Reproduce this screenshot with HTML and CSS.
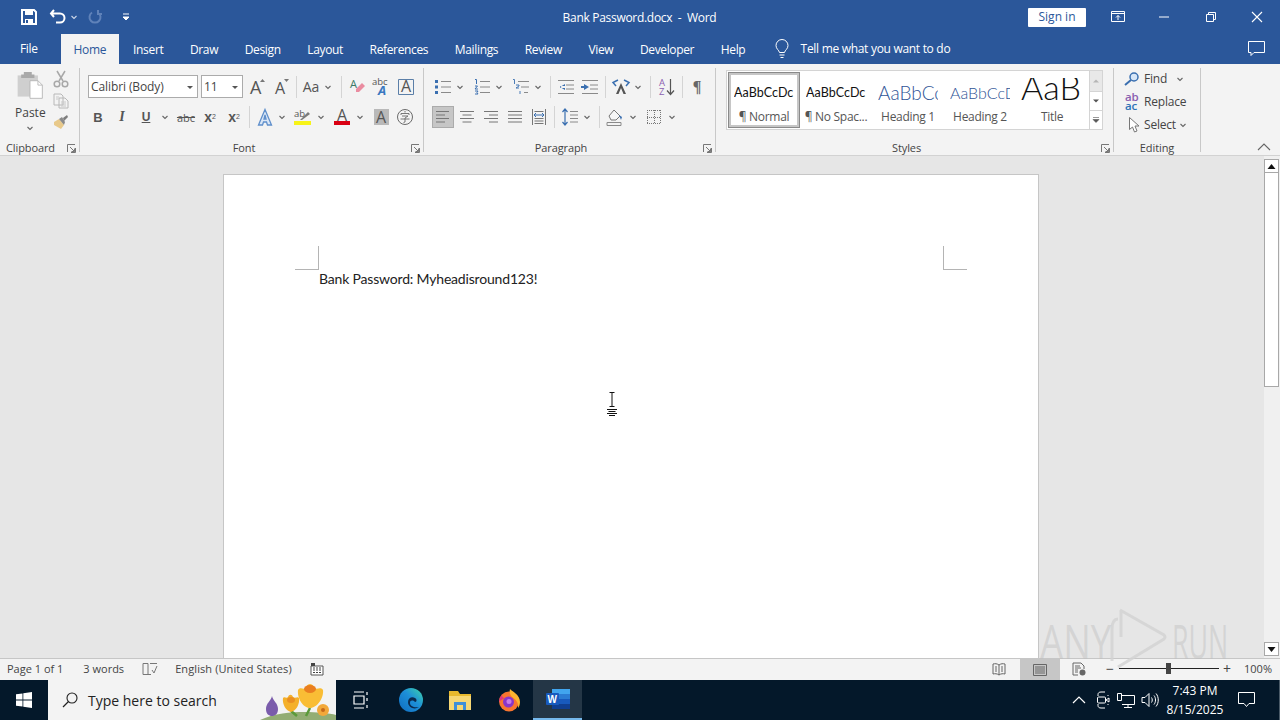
FILE: index.html
```html
<!DOCTYPE html>
<html lang="en">
<head>
<meta charset="utf-8">
<title>Bank Password.docx - Word</title>
<link rel="stylesheet" href="styles.css">
</head>
<body>
<svg class="defs" width="0" height="0" aria-hidden="true">
<symbol id="chev" viewBox="0 0 10 10"><path d="M2.5 4 5 6.5 7.5 4" fill="none" stroke="#666" stroke-width="1.1"/></symbol>
</svg>
<div class="app">
  <header class="titlebar">
    <div class="qat">
      <svg class="q1" width="18" height="18" viewBox="0 0 18 18"><path d="M2 2h12l2 2v12H2z" fill="none" stroke="#fff" stroke-width="2"/><path d="M5 2h8v5H5zM5 11h8v5H5z" fill="#fff"/><path d="M6 12h2v3H6z" fill="#2b579a"/></svg>
      <svg class="q2" width="18" height="18" viewBox="0 0 18 18"><path d="M5 2 2 5.500 5 9M3 5.500h8a4 4 0 0 1 0 9H7" fill="none" stroke="#fff" stroke-width="2"/></svg>
      <svg class="q3" width="10" height="10" viewBox="0 0 10 10"><path d="M2.500 4 5 6.500 7.500 4" fill="none" stroke="#cdd7e8" stroke-width="1.100"/></svg>
      <svg class="q4" width="16" height="16" viewBox="0 0 16 16"><path d="M5 3.500a5.500 5.500 0 1 0 6 0M11 1v4h4" fill="none" stroke="#5f82b9" stroke-width="2"/></svg>
      <svg class="q5" width="10" height="10" viewBox="0 0 10 10"><path d="M2 2h6M2 5h6L5 8z" fill="#fff" stroke="#fff"/></svg>
    </div>
    <div class="doc-title">Bank Password.docx&nbsp; -&nbsp; Word</div>
    <div class="win">
      <button class="signin">Sign in</button>
      <svg class="w1" width="16" height="14" viewBox="0 0 16 14"><path d="M.5 1.500h13v10H.5zM.5 3.500h13M7 10V5.500M5 7.500 7 5.500l2 2" fill="none" stroke="#fff"/></svg>
      <svg class="w2" width="12" height="12" viewBox="0 0 12 12"><path d="M1 6h10" stroke="#fff"/></svg>
      <svg class="w3" width="12" height="12" viewBox="0 0 12 12"><path d="M1.500 3.500h7v7h-7zM3.500 3.500v-2h7v7h-2" fill="none" stroke="#fff"/></svg>
      <svg class="w4" width="12" height="12" viewBox="0 0 12 12"><path d="M1 1l10 10M11 1 1 11" stroke="#fff" stroke-width="1.100"/></svg>
    </div>
  </header>
  <nav class="tabs">
    <span class="tab file">File</span>
    <span class="tab active">Home</span>
    <span class="tab">Insert</span>
    <span class="tab">Draw</span>
    <span class="tab">Design</span>
    <span class="tab">Layout</span>
    <span class="tab">References</span>
    <span class="tab">Mailings</span>
    <span class="tab">Review</span>
    <span class="tab">View</span>
    <span class="tab">Developer</span>
    <span class="tab">Help</span>
    <svg class="bulb" width="16" height="20" viewBox="0 0 16 20"><path d="M5.500 13.500C5 11 2 10 2 6.500a6 6 0 0 1 12 0c0 3.500-3 4.500-3.500 7zM5.500 16h5M6.500 18.500h3" fill="none" stroke="#fff"/></svg>
    <span class="tellme">Tell me what you want to do</span>
    <svg class="comment" width="18" height="16" viewBox="0 0 18 16"><path d="M.5.500h16v11H6l-3 3v-3H.5z" fill="none" stroke="#fff"/></svg>
  </nav>
  <section class="ribbon">
    <div class="group g-clip">
      <div class="clip-body">
        <div class="paste">
          <svg width="30" height="30" viewBox="0 0 30 34"><path d="M1 5h23v24H1z" fill="#cfcfcf"/><path d="M8 4h9V1H8zM5 4h15v4H5z" fill="#a9a9a9"/><path d="M15 11h9l5 5v15H15z" fill="#fff" stroke="#b5b5b5"/><path d="M24 11v5h5" fill="none" stroke="#b5b5b5"/></svg>
          <span class="paste-l">Paste</span>
          <svg class="ch" width="10" height="10"><use href="#chev"/></svg>
        </div>
        <div class="clip-tools">
          <svg width="16" height="18" viewBox="0 0 16 18"><path d="M4 1l6 10M12 1 6 11" stroke="#a8a8a8" stroke-width="1.500"/><circle cx="4" cy="14" r="2.800" fill="none" stroke="#a8a8a8" stroke-width="1.500"/><circle cx="12" cy="14" r="2.800" fill="none" stroke="#a8a8a8" stroke-width="1.500"/></svg>
          <svg width="16" height="16" viewBox="0 0 16 16"><path d="M1 1h7l2 2v9H1zM6 5h6l3 3v7H6z" fill="#f3f3f3" stroke="#b8b8b8"/><path d="M8 9h5M8 11h5M8 13h5M3 4h3M3 6h2" stroke="#c8c8c8"/></svg>
          <svg width="16" height="16" viewBox="0 0 16 16"><path d="M1 8l5-3 5 6-3 4-7-4z" fill="#e8c98a"/><path d="M6 5l3-2 3 5-1 3z" fill="#8a8a8a"/><path d="M10 4l4-3 1 2-4 4z" fill="#7d7d7d"/></svg>
        </div>
      </div>
      <div class="g-label clip-label"><span>Clipboard</span><svg class="launch" width="9" height="9" viewBox="0 0 9 9"><path d="M.500 8V.500H8M3 3l4.500 4.500M7.500 4.500v3h-3M8.500 4v4.500H4" fill="none" stroke="#777"/></svg></div>
    </div>
    <div class="group g-font">
      <div class="rows">
        <div class="row r1">
          <div class="combo c-font ml2"><span>Calibri (Body)</span><svg width="10" height="10" viewBox="0 0 10 10"><path d="M2 4h6L5 7z" fill="#555"/></svg></div>
          <div class="combo c-size ml3"><span>11</span><svg width="10" height="10" viewBox="0 0 10 10"><path d="M2 4h6L5 7z" fill="#555"/></svg></div>
          <span class="tool ml3"><svg width="20" height="20" viewBox="0 0 20 20"><text x="2" y="17" class="ic-a big">A</text><path d="M12 5l2.500-3L17 5z" fill="#777"/></svg></span>
          <span class="tool"><svg width="20" height="20" viewBox="0 0 20 20"><text x="3" y="17" class="ic-a">A</text><path d="M12 2l2.500 3L17 2z" fill="#777"/></svg></span>
          <i class="sep ml2"></i>
          <span class="tool ml2 txt aa">Aa</span>
          <span class="chev"><svg width="10" height="10"><use href="#chev"/></svg></span>
          <i class="sep ml8"></i>
          <span class="tool ml3"><svg width="20" height="20" viewBox="0 0 20 20"><path d="M9 12l6-6 3 3-6 6h-3z" fill="#ea8ca0"/><text x="3" y="11" class="ic-s grn">A</text></svg></span>
          <span class="tool"><svg width="20" height="20" viewBox="0 0 20 20"><text x="1" y="8" class="ic-xs">abc</text><text x="7" y="18" class="ic-i">A</text></svg></span>
          <span class="tool"><svg width="20" height="20" viewBox="0 0 20 20"><path d="M3.500 2.500h15v15h-15z" fill="none" stroke="#5b7fa8"/><text x="6" y="15" class="ic-a">A</text></svg></span>
        </div>
        <div class="row r2">
          <span class="tool txt b">B</span>
          <span class="tool txt i">I</span>
          <span class="tool txt u">U</span>
          <span class="chev ml2"><svg width="10" height="10"><use href="#chev"/></svg></span>
          <span class="tool ml4 txt abc">abc</span>
          <span class="tool txt sx">x<sub>2</sub></span>
          <span class="tool txt sx">x<sup>2</sup></span>
          <i class="sep ml3"></i>
          <span class="tool ml3"><svg width="20" height="20" viewBox="0 0 20 20"><path d="M10 2.500 16.500 18h-4l-1-3h-3l-1 3h-4zM10 8l-1 4h2z" fill="#dbe7f6" stroke="#5f8fcb" stroke-width="1.300"/></svg></span>
          <span class="chev"><svg width="10" height="10"><use href="#chev"/></svg></span>
          <span class="tool ml4"><svg width="20" height="20" viewBox="0 0 20 20"><rect x="1" y="14" width="17" height="4" fill="#f7f318"/><text x="1" y="10" class="ic-xs">ab</text><path d="M7 13l8-8 2 2-8 6z" fill="#7b7b7b"/></svg></span>
          <span class="chev ml1"><svg width="10" height="10"><use href="#chev"/></svg></span>
          <span class="tool ml4"><svg width="20" height="20" viewBox="0 0 20 20"><rect x="2" y="14" width="16" height="4" fill="#d90012"/><text x="5" y="14" class="ic-a">A</text></svg></span>
          <span class="chev ml1"><svg width="10" height="10"><use href="#chev"/></svg></span>
          <span class="tool ml4"><svg width="20" height="20" viewBox="0 0 20 20"><rect x="3" y="2" width="15" height="16" fill="#b9b9b9"/><text x="5" y="16" class="ic-a">A</text></svg></span>
          <span class="tool"><svg width="20" height="20" viewBox="0 0 20 20"><circle cx="10" cy="10" r="7.500" fill="none" stroke="#6a6a6a"/><path d="M10 4v1.500M6 8V6.500h8V8M7 9h6l-3 2M5.500 12h9M10 11v4l-1.500.5" fill="none" stroke="#6a6a6a" stroke-width=".9"/></svg></span>
        </div>
      </div>
      <div class="g-label lb-font"><span>Font</span><svg class="launch" width="9" height="9" viewBox="0 0 9 9"><path d="M.500 8V.500H8M3 3l4.500 4.500M7.500 4.500v3h-3M8.500 4v4.500H4" fill="none" stroke="#777"/></svg></div>
    </div>
    <div class="group g-para">
      <div class="rows">
        <div class="row r1">
          <span class="tool"><svg width="20" height="20" viewBox="0 0 20 20"><path d="M8 4.500h10M8 10h10M8 15.500h10" stroke="#8a8a8a"/><path d="M2 3h3v3H2zM2 8.500h3v3H2zM2 14h3v3H2z" fill="#3a6fb0"/></svg></span>
          <span class="chev"><svg width="10" height="10"><use href="#chev"/></svg></span>
          <span class="tool ml5"><svg width="20" height="20" viewBox="0 0 20 20"><path d="M8 4.500h10M8 10h10M8 15.500h10" stroke="#8a8a8a"/><path d="M3 2.500h1.500V7M3 9h2.500L3 12h3M3 14h3l-1 1.500 1 1.500H3" fill="none" stroke="#3a6fb0"/></svg></span>
          <span class="chev"><svg width="10" height="10"><use href="#chev"/></svg></span>
          <span class="tool ml5"><svg width="20" height="20" viewBox="0 0 20 20"><path d="M7 4.500h11M10 10h8M13 15.500h4" stroke="#8a8a8a"/><path d="M2 2.500h1.500V7M5 8h3v1l-3 2h3M9 14v3" fill="none" stroke="#3a6fb0" stroke-width=".9"/></svg></span>
          <span class="chev"><svg width="10" height="10"><use href="#chev"/></svg></span>
          <i class="sep ml7"></i>
          <span class="tool ml3"><svg width="20" height="20" viewBox="0 0 20 20"><path d="M2 3.500h16M10 8h8M10 12h8M2 16.500h16" stroke="#8a8a8a"/><path d="M9 7 4 10l5 3zM4 9h5v2H4z" fill="#3a6fb0"/></svg></span>
          <span class="tool"><svg width="20" height="20" viewBox="0 0 20 20"><path d="M2 3.500h16M10 8h8M10 12h8M2 16.500h16" stroke="#8a8a8a"/><path d="M4 7l5 3-5 3zM1 9h5v2H1z" fill="#3a6fb0"/></svg></span>
          <i class="sep ml3"></i>
          <span class="tool ml3"><svg width="20" height="20" viewBox="0 0 20 20"><path d="M10 6 5 17h2.500l2.500-6 2.500 6H15z" fill="#555"/><path d="M7 3 2 5.500 5 9M13 3l5 2.500L15 9" fill="none" stroke="#3a6fb0" stroke-width="1.500"/></svg></span>
          <span class="chev"><svg width="10" height="10"><use href="#chev"/></svg></span>
          <i class="sep ml7"></i>
          <span class="tool ml3"><svg width="20" height="20" viewBox="0 0 20 20"><text x="3" y="9" class="ic-xs pur">A</text><text x="3" y="18" class="ic-xs pur">Z</text><path d="M14.500 2v15M11 13.500l3.500 4 3.500-4" fill="none" stroke="#555" stroke-width="1.200"/></svg></span>
          <i class="sep ml4"></i>
          <span class="tool ml2 txt pil">¶</span>
        </div>
        <div class="row r2">
          <span class="tool on"><svg width="20" height="20" viewBox="0 0 20 20"><path d="M3 4.500h13M3 8h9M3 11.500h13M3 15h9" stroke="#777"/></svg></span>
          <span class="tool"><svg width="20" height="20" viewBox="0 0 20 20"><path d="M3 4.500h14M5.500 8h9M3 11.500h14M5.500 15h9" stroke="#777"/></svg></span>
          <span class="tool"><svg width="20" height="20" viewBox="0 0 20 20"><path d="M3 4.500h14M8 8h9M3 11.500h14M8 15h9" stroke="#777"/></svg></span>
          <span class="tool"><svg width="20" height="20" viewBox="0 0 20 20"><path d="M3 4.500h14M3 8h14M3 11.500h14M3 15h14" stroke="#777"/></svg></span>
          <span class="tool"><svg width="20" height="20" viewBox="0 0 20 20"><path d="M3.500 2v16M16.500 2v16" stroke="#777"/><path d="M5.500 4.500h9M5.500 11.500h9M5.500 14h9M5.500 16.500h9" stroke="#777"/><path d="M5 8h10M7 6 5 8l2 2M13 6l2 2-2 2" fill="none" stroke="#3a6fb0"/></svg></span>
          <i class="sep ml3"></i>
          <span class="tool ml3"><svg width="20" height="20" viewBox="0 0 20 20"><path d="M10 4.500h8M10 8h8M10 11.500h8M10 15h8" stroke="#8a8a8a"/><path d="M5 2v16M2.500 5 5 2l2.500 3M2.500 15 5 18l2.500-3" fill="none" stroke="#3a6fb0" stroke-width="1.200"/></svg></span>
          <span class="chev"><svg width="10" height="10"><use href="#chev"/></svg></span>
          <i class="sep ml7"></i>
          <span class="tool ml3"><svg width="20" height="20" viewBox="0 0 20 20"><path d="M2 15.500h14v3H2z" fill="none" stroke="#8a8a8a"/><path d="M4 9l5-6 6 6-4 4H6z" fill="#f6f6f6" stroke="#777"/><path d="M14 8l3 2-1 3z" fill="#3a6fb0"/></svg></span>
          <span class="chev ml1"><svg width="10" height="10"><use href="#chev"/></svg></span>
          <span class="tool ml4"><svg width="20" height="20" viewBox="0 0 20 20"><path d="M3 3.500h14M3 16.500h14M3.500 3v14M16.500 3v14M10.500 3v14M3 10.500h14" fill="none" stroke="#777" stroke-dasharray="1 1"/></svg></span>
          <span class="chev ml1"><svg width="10" height="10"><use href="#chev"/></svg></span>
        </div>
      </div>
      <div class="g-label lb-para"><span>Paragraph</span><svg class="launch" width="9" height="9" viewBox="0 0 9 9"><path d="M.500 8V.500H8M3 3l4.500 4.500M7.500 4.500v3h-3M8.500 4v4.500H4" fill="none" stroke="#777"/></svg></div>
    </div>
    <div class="group g-styles">
      <div class="gallery">
        <div class="style sel"><span class="pv pv-n">AaBbCcDc</span><span class="sl">¶ Normal</span></div>
        <div class="style"><span class="pv pv-n">AaBbCcDc</span><span class="sl">¶ No Spac...</span></div>
        <div class="style"><span class="pv pv-h1">AaBbCc</span><span class="sl">Heading 1</span></div>
        <div class="style"><span class="pv pv-h2">AaBbCcD</span><span class="sl">Heading 2</span></div>
        <div class="style"><span class="pv pv-t">AaB</span><span class="sl">Title</span></div>
        <div class="gal-scroll">
          <span class="gs up"><svg width="8" height="6" viewBox="0 0 8 6"><path d="M1 4.500h6L4 1.500z" fill="#b5b5b5"/></svg></span>
          <span class="gs dn"><svg width="8" height="6" viewBox="0 0 8 6"><path d="M1 1.500h6L4 4.500z" fill="#555"/></svg></span>
          <span class="gs more"><svg width="8" height="8" viewBox="0 0 8 8"><path d="M1 1.500h6M1 3.500h6L4 6.500z" fill="#555" stroke="#555" stroke-width=".6"/></svg></span>
        </div>
      </div>
      <div class="g-label lb-styles"><span>Styles</span><svg class="launch" width="9" height="9" viewBox="0 0 9 9"><path d="M.500 8V.500H8M3 3l4.500 4.500M7.500 4.500v3h-3M8.500 4v4.500H4" fill="none" stroke="#777"/></svg></div>
    </div>
    <div class="group g-edit">
      <div class="edit-list">
        <div class="ed e1"><svg width="16" height="16" viewBox="0 0 16 16"><circle cx="10" cy="6" r="4" fill="#d7e6f7" stroke="#3a6fb0" stroke-width="1.500"/><path d="M7 9l-6 5" stroke="#3a6fb0" stroke-width="2"/></svg><span>Find</span><svg class="edc" width="10" height="10"><use href="#chev"/></svg></div>
        <div class="ed e2"><svg width="16" height="20" viewBox="0 0 16 20"><text x="1" y="9" class="ic-ed pur">ab</text><text x="1" y="18" class="ic-ed blu">ac</text></svg><span>Replace</span></div>
        <div class="ed e3"><svg width="14" height="18" viewBox="0 0 14 18"><path d="M2.500 1.500v12l3-2.500 2 5 2.500-1-2-5h4z" fill="#fff" stroke="#777"/></svg><span>Select</span><svg class="edc2" width="10" height="10"><use href="#chev"/></svg></div>
      </div>
      <div class="g-label"><span>Editing</span></div>
    </div>
    <div class="collapse"><svg width="14" height="8" viewBox="0 0 14 8"><path d="M1 7l6-6 6 6" fill="none" stroke="#666" stroke-width="1.100"/></svg></div>
  </section>
  <main class="workspace">
    <div class="canvas">
      <div class="page">
        <div class="margins">
          <div class="crop-row"><i class="crop left"></i><i class="crop right"></i></div>
          <p class="doc-text">Bank Password: Myheadisround123!</p>
        </div>
      </div>
    </div>
    <div class="vscroll">
      <span class="sb-btn"><svg width="9" height="5" viewBox="0 0 9 5"><path d="M.500 5 4.500 0l4 5z" fill="#111"/></svg></span>
      <span class="sb-thumb"></span>
      <span class="sb-rest"></span>
      <span class="sb-btn"><svg width="9" height="5" viewBox="0 0 9 5"><path d="M.500 0 4.500 5l4-5z" fill="#111"/></svg></span>
    </div>
  </main>
  <footer class="status">
    <span class="st-a">Page 1 of 1</span>
    <span class="st-b">3 words</span>
    <svg class="st-ic" width="16" height="14" viewBox="0 0 16 14"><path d="M1 1.500h5v11H1zM9 12.500H6M8 1.500h7M10 8l2 3 3-7" fill="none" stroke="#777"/></svg>
    <span class="st-c">English (United States)</span>
    <svg class="st-ic2" width="14" height="14" viewBox="0 0 14 14"><path d="M1 4h12v9H1z" fill="#fff" stroke="#555"/><path d="M1 1h4v3H1z" fill="#444"/><path d="M3 6h8M3 8h8M3 10.500h8" stroke="#444" stroke-dasharray="2 1"/></svg>
    <div class="st-right">
      <svg width="14" height="12" viewBox="0 0 14 12" class="v-read"><path d="M7 2C5 .500 3 .500 1 1v10c2-.500 4-.500 6 1 2-1.500 4-1.500 6-1V1C11 .500 9 .500 7 2zM7 2v10M3 4h2M3 6h2M3 8h2M9 4h2M9 6h2M9 8h2" fill="none" stroke="#666"/></svg>
      <span class="v-print"><svg width="14" height="12" viewBox="0 0 14 12"><path d="M.500.500h13v11H.500zM2 3h10M2 5h10M2 7h10M2 9h10" fill="none" stroke="#666"/></svg></span>
      <svg width="14" height="14" viewBox="0 0 14 14" class="v-web"><path d="M1 1h8l3 3v3M1 1v12h5M3 4h5M3 6h6M3 8h3M3 10h3" fill="none" stroke="#666"/><circle cx="10.500" cy="10.500" r="3" fill="#666"/></svg>
      <span class="zm">−</span>
      <span class="slider"><i class="knob"></i></span>
      <span class="zm zp">+</span>
      <span class="pct">100%</span>
    </div>
  </footer>
  <footer class="taskbar">
    <span class="start"><svg width="16" height="16" viewBox="0 0 16 16"><path d="M0 2.300 6.500 1.400v6.200H0zM7.300 1.300 16 0v7.600H7.300zM0 8.400h6.500v6.200L0 13.700zM7.300 8.400H16V16l-8.700-1.200z" fill="#fff"/></svg></span>
    <div class="search">
      <svg width="18" height="18" viewBox="0 0 18 18"><circle cx="11" cy="7" r="5" fill="none" stroke="#222" stroke-width="1.100"/><path d="M7.500 10.500 2 16" stroke="#222" stroke-width="1.300"/></svg>
      <span>Type here to search</span>
      <svg class="flowers" width="76" height="40" viewBox="0 0 76 40">
        <path d="M0 40C15 33 30 32 45 32 55 32 70 33 76 35V40Z" fill="#93ad74"/>
        <path d="M50 28 46 36M31 31 37 36" stroke="#5b9a3a" stroke-width="2.500"/>
        <path d="M12 16C13 21 18 23 18 29 18 34 15 36 12 36 9 36 6 34 6 29 6 23 11 21 12 16Z" fill="#7a5cab"/>
        <path d="M23 18C24 16 27 19 28 17 29 14 32 14 33 17 35 19 38 16 39 18 40 24 36 31 31 32 26 31 22 24 23 18Z" fill="#f4b02a"/>
        <ellipse cx="31" cy="20" rx="4" ry="3" fill="#ea8f22"/>
        <path d="M38 10C41 6 44 11 46 7 48 3 52 3 54 7 56 11 60 6 63 10 64 18 57 28 50 28 43 28 37 18 38 10Z" fill="#f9bd35"/>
        <ellipse cx="50" cy="9" rx="6" ry="4" fill="#ea7f20"/>
        <circle cx="63" cy="30" r="6" fill="#f2a83a"/><circle cx="63" cy="30" r="2" fill="#c66a1a"/>
      </svg>
    </div>
    <span class="task tv"><svg width="16" height="18" viewBox="0 0 16 18"><path d="M1 1h10M1 17h10M1 5h10v8H1zM14 1v3M14 7v3M14 14v3" fill="none" stroke="#fff" stroke-width="1.200"/></svg></span>
    <span class="task"><svg width="24" height="24" viewBox="0 0 24 24"><defs><linearGradient id="e1" x1="0" y1="1" x2="1" y2="0"><stop offset="0" stop-color="#0f6cc0"/><stop offset=".55" stop-color="#1d8fd8"/><stop offset="1" stop-color="#3fd6a8"/></linearGradient></defs><circle cx="12" cy="12" r="12" fill="url(#e1)"/><path d="M9 14C9 10 13 8 16 10 18 11 18 14 16 14 14 12 11 12 11 15 11 18 15 20 20 19 16 22 9 20 9 14Z" fill="#0b2a4e"/></svg></span>
    <span class="task"><svg width="24" height="22" viewBox="0 0 24 22"><path d="M1 2h9l2 3h11v16H1z" fill="#e8b92e"/><path d="M1 7h22v14H1z" fill="#f7d774"/><path d="M6 13h12v8H6z" fill="#3f8fd8"/><path d="M9 16h6v5H9z" fill="#f7d774"/></svg></span>
    <span class="task"><svg width="24" height="24" viewBox="0 0 24 24"><circle cx="12" cy="13.500" r="10" fill="#f8752f"/><path d="M13 1c3 3 10 6 10 13 0 3-1 5-2 6 1-6-3-9-6-11-2-2-3-5-2-8z" fill="#fbb42f"/><circle cx="11.500" cy="14" r="5.500" fill="#8a36c9"/><circle cx="12" cy="13.500" r="2.500" fill="#c77be8"/><path d="M2 14c0-3 1-5 3-7 0 2 1 3 3 3-3 1-5 3-6 4z" fill="#e2337d"/></svg></span>
    <span class="task word"><svg width="24" height="22" viewBox="0 0 24 22"><rect x="6" y="1" width="18" height="20" rx="1" fill="#2b7cd3"/><path d="M6 1h18v5H6z" fill="#41a5ee"/><path d="M6 11h18v5H6z" fill="#185abd"/><path d="M6 16h18v5H6z" fill="#103f91"/><rect x="0" y="5" width="13" height="12" rx="1" fill="#185abd"/><text x="1.500" y="15" class="w-w">W</text></svg></span>
    <div class="tray">
      <svg class="t1" width="14" height="8" viewBox="0 0 14 8"><path d="M1 7l6-6 6 6" fill="none" stroke="#fff" stroke-width="1.200"/></svg>
      <svg class="t2" width="14" height="18" viewBox="0 0 14 18"><path d="M2 5V3.500C2 2 3 1 5 1h4M2 13v1.500C2 16 3 17 5 17h4M12 4v1M12 13v1" fill="none" stroke="#fff"/><rect x="1.500" y="6" width="8" height="6" rx="1" fill="none" stroke="#fff"/><path d="M10 9l3-2v4z" fill="none" stroke="#fff"/></svg>
      <svg class="t3" width="18" height="16" viewBox="0 0 18 16"><path d="M.500 1.500h4v7h-4zM5 3.500h12.500v9H5M11 12.500v3M7 15.500h8" fill="none" stroke="#fff"/></svg>
      <svg class="t4" width="18" height="16" viewBox="0 0 18 16"><path d="M1 5.500h3L8 1.500v13L4 10.500H1z" fill="none" stroke="#fff"/><path d="M10.500 5.500c1 1.500 1 3.500 0 5M13 3.500c2 2.500 2 6.500 0 9M15 1.500c3 3.500 3 9.500 0 13" fill="none" stroke="#fff"/></svg>
      <div class="clock"><span>7:43 PM</span><span>8/15/2025</span></div>
      <svg class="t5" width="18" height="16" viewBox="0 0 18 16"><path d="M.500.500h16v11H11l-2.500 3-2.500-3H.500z" fill="none" stroke="#fff"/></svg>
      <i class="show-desk"></i>
    </div>
  </footer>
</div>
<div class="ibeam"><svg width="12" height="25" viewBox="0 0 12 25"><path d="M3.500.500h5M3.500 14.500h5M6 1v13M1 17.500h10M2.500 19.500h7M1 21.500h10M3 23.500h6" fill="none" stroke="#111"/></svg></div>
<div class="watermark"><span class="wm-a">ANY</span><svg width="62" height="68" viewBox="0 0 62 68"><path d="M12 3 56 28Q58 30 56 32L10 60M4 54V22Q4 12 10 12M13 3V30" fill="none" stroke="#d2d2d2" stroke-opacity=".8" stroke-width="3"/></svg><span class="wm-b">RUN</span></div>
</body>
</html>
```
FILE: styles.css
```css
* { box-sizing: border-box; }
html, body { margin: 0; padding: 0; height: 720px; overflow: hidden; }
body { font-family: "Open Sans", "Noto Sans", sans-serif; font-size: 12px; color: #444; background: #e6e6e6; }
.defs { position: absolute; }
svg { display: block; flex: none; overflow: visible; }
.app { width: 1280px; height: 720px; display: flex; flex-direction: column; }

.titlebar { height: 34px; background: #2b579a; color: #fff; display: flex; align-items: center; justify-content: space-between; flex: none; }
.qat { display: flex; align-items: center; width: 140px; padding-left: 20px; }
.q2 { margin-left: 11px; }
.q3 { margin-left: 2px; }
.q4 { margin-left: 8px; }
.q5 { margin-left: 18px; }
.doc-title { font-size: 12px; letter-spacing: -.3px; margin-left: 111px; }
.win { display: flex; align-items: center; padding-right: 17px; }
.signin { width: 58px; height: 19px; margin-right: 25px; border: 0; border-radius: 1px; background: #fff; color: #2b579a; font: 12px "Open Sans", sans-serif; padding: 0 0 2px; }
.w2 { margin-left: 31px; }
.w3 { margin-left: 35px; }
.w4 { margin-left: 34px; }

.tabs { height: 30px; background: #2b579a; color: #fff; display: flex; align-items: center; flex: none; padding-left: 2px; position: relative; }
.tab { padding: 1px 13.300px 0; font-size: 12px; letter-spacing: -.35px; line-height: 29px; height: 30px; }
.tab.file { padding: 0 23px 0 18px; }
.tab.active { background: #f3f3f3; color: #2b579a; padding: 1px 13px 0; }
.tab.active + .tab { padding-left: 14px; }
.bulb { margin-left: 15px; }
.tellme { margin-left: 11px; padding-bottom: 2px; font-size: 12px; letter-spacing: -.3px; }
.comment { margin-left: auto; margin-right: 14px; }

.ribbon { height: 92px; background: #f3f3f3; border-bottom: 1px solid #d2d2d2; display: flex; flex: none; position: relative; }
.group { position: relative; display: flex; flex-direction: column; border-right: 1px solid #c8c8c8; height: 84px; margin-top: 4px; flex: none; }
.g-clip { width: 80px; }
.g-font { width: 344px; padding-left: 6px; }
.g-para { width: 292px; padding-left: 7px; }
.g-styles { width: 398px; padding-left: 10px; }
.g-edit { width: 87px; }
.rows { height: 68px; padding-top: 7px; display: flex; flex-direction: column; gap: 8px; }
.row { height: 23px; display: flex; align-items: center; flex: none; }
.r2 { height: 22px; }
.tool { width: 24px; height: 22px; display: flex; align-items: center; justify-content: center; flex: none; color: #555; }
.chev { width: 10px; display: flex; justify-content: center; flex: none; }
.sep { width: 1px; height: 22px; background: #d4d4d4; flex: none; }
.ml1 { margin-left: 1px; } .ml2 { margin-left: 2px; } .ml3 { margin-left: 3px; } .ml4 { margin-left: 4px; }
.ml5 { margin-left: 5px; } .ml7 { margin-left: 7px; } .ml8 { margin-left: 8px; }
.combo { height: 23px; background: #fff; border: 1px solid #ababab; display: flex; align-items: center; justify-content: space-between; padding: 0 2px; color: #444; flex: none; }
.combo span { font-size: 12px; letter-spacing: -.1px; }
.c-font { width: 110px; }
.c-size { width: 42px; }
.txt { font-weight: 700; font-size: 13px; font-family: "Liberation Sans", sans-serif; }
.aa { font-weight: 400; font-size: 14px; font-family: "Open Sans", sans-serif; }
.b { color: #555; }
.i { font-style: italic; font-family: "Liberation Serif", serif; font-weight: 700; font-size: 14px; color: #555; }
.u { text-decoration: underline; color: #555; font-size: 12px; }
.abc { font-size: 11px; font-weight: 400; text-decoration: line-through; color: #555; font-family: "Open Sans", sans-serif; }
.sx { font-size: 14px; }
.sx sub, .sx sup { font-size: 7px; font-weight: 400; line-height: 0; }
.pil { font-size: 16px; color: #666; font-weight: 700; font-family: "Liberation Serif", serif; }
.on { width: 22px; margin: 0 1px; background: #c6c6c6; border: 1px solid #ababab; }
.ic-a { font: 400 16px "Open Sans", sans-serif; fill: #555; }
.ic-a.big { font-size: 18px; }
.ic-s { font: 400 11px "Open Sans", sans-serif; }
.grn { fill: #3d7a67; }
.ic-xs { font: 400 9.500px "Open Sans", sans-serif; fill: #555; }
.pur { fill: #8a5fb0; }
.blu { fill: #2f74b8; }
.ic-i { font: italic 700 13px "Open Sans", sans-serif; fill: #3a78c0; }
.ic-ed { font: 600 11.500px "Open Sans", sans-serif; }
.g-label { height: 15px; margin-top: auto; margin-bottom: -3px; position: relative; text-align: center; font-size: 11px; letter-spacing: -.1px; color: #444; line-height: 15px; }
.lb-font { padding-right: 21px; }
.lb-para { padding-right: 24px; }
.lb-styles { padding-right: 26px; }
.launch { position: absolute; right: 3px; top: 4px; }

.clip-body { display: flex; height: 68px; }
.paste { width: 46px; padding-left: 15px; display: flex; flex-direction: column; align-items: flex-start; padding-top: 3px; }
.paste-l { font-size: 12px; margin: 3px 0 0; color: #444; line-height: 17px; width: 30px; text-align: center; }
.paste .ch { margin-left: 10px; margin-top: 2px; }
.clip-tools { margin-left: 7px; display: flex; flex-direction: column; padding-top: 2px; gap: 5px; }
.clip-label { text-align: left; padding-left: 6px; }

.gallery { width: 377px; height: 60px; margin-top: 2px; background: #fff; border: 1px solid #d4d4d4; display: flex; padding: 1px 0 0 1px; }
.style { width: 72px; height: 56px; overflow: hidden; display: flex; flex-direction: column; align-items: center; flex: none; border: 3px solid transparent; }
.style.sel { border-color: #c6c6c6; outline: 1px solid #8a8a8a; outline-offset: -1px; }
.pv { height: 30px; width: 60px; overflow: hidden; white-space: nowrap; display: block; text-align: left; flex: none; }
.pv-n { font: 12.500px/35px "Lato", sans-serif; color: #111; letter-spacing: .05px; }
.pv-h1 { font: 300 19px/35px "Lato", sans-serif; color: #2f5496; }
.pv-h2 { font: 300 16px/35px "Lato", sans-serif; color: #2f5496; }
.pv-t { font: 300 34px/18px "Lato", sans-serif; color: #111; width: 62px; height: 27px; margin-top: 3px; }
.sl { margin-top: 4px; font-size: 12px; letter-spacing: -.3px; color: #555; line-height: 16px; white-space: nowrap; }
.gal-scroll { margin: -1px 0 0 1px; width: 15px; display: flex; flex-direction: column; border-left: 1px solid #d4d4d4; }
.gs { height: 19px; display: flex; align-items: center; justify-content: center; border-bottom: 1px solid #d4d4d4; }
.gs.up { height: 21px; background: #e8e8e8; }
.gs.more { height: 18px; border: 0; }

.edit-list { height: 68px; margin-top: -1px; padding: 0 0 0 10px; display: flex; flex-direction: column; }
.ed { height: 23px; display: flex; align-items: center; font-size: 12px; letter-spacing: -.2px; color: #444; gap: 4px; flex: none; }
.edc { margin-left: 4px; }
.e3 { margin-left: 3px; gap: 3px; }
.edc2 { margin-left: -1px; }
.collapse { position: absolute; left: 1257px; top: 79px; }

.workspace { flex: 1; display: flex; min-height: 0; background: #e6e6e6; }
.canvas { flex: 1; min-width: 0; padding: 18px 0 0 223px; overflow: hidden; }
.page { width: 816px; height: 600px; background: #fff; border: 1px solid #c6c6c6; padding: 71px 0 0 71px; }
.crop-row { width: 672px; height: 24px; display: flex; justify-content: space-between; }
.crop { display: block; width: 24px; height: 24px; border-bottom: 1px solid #b4b4b4; }
.crop.left { border-right: 1px solid #b4b4b4; }
.crop.right { border-left: 1px solid #b4b4b4; }
.doc-text { margin: 0 0 0 24px; font: 14px/18px "Lato", sans-serif; letter-spacing: -.18px; color: #222; }
.vscroll { width: 16px; background: #f0f0f0; display: flex; flex-direction: column; align-items: flex-start; padding: 3px 0 2px; flex: none; }
.sb-btn { width: 15px; height: 14px; background: #fff; border: 1px solid #a8a8a8; display: flex; align-items: center; justify-content: center; flex: none; }
.sb-thumb { width: 15px; height: 214px; background: #fff; border: 1px solid #a8a8a8; border-top: 0; flex: none; }
.sb-rest { flex: 1; }

.status { height: 22px; background: #f3f3f3; border-top: 1px solid #c6c6c6; display: flex; align-items: center; flex: none; font-size: 11px; color: #444; padding: 0 0 2px 7px; }
.st-b { margin-left: 20px; }
.st-ic { margin-left: 18px; }
.st-c { margin-left: 17px; letter-spacing: .1px; }
.st-ic2 { margin-left: 18px; }
.st-right { margin-left: auto; display: flex; align-items: center; height: 21px; margin-bottom: -2px; padding: 0 8px 2px 0; }
.v-print { width: 40px; height: 21px; margin-bottom: -2px; background: #c6c6c6; display: flex; align-items: center; justify-content: center; margin-left: 14px; }
.v-web { margin-left: 12px; }
.zm { width: 10px; text-align: center; font-size: 14px; line-height: 14px; margin-left: 19px; }
.slider { width: 100px; height: 1px; background: #222; margin-left: 4px; position: relative; }
.knob { position: absolute; left: 47px; top: -5px; width: 5px; height: 11px; background: #444; }
.zp { margin-left: 3px; }
.pct { margin-left: 12px; }

.taskbar { height: 40px; background: #04182a; display: flex; align-items: center; flex: none; color: #fff; }
.start { width: 48px; height: 40px; display: flex; align-items: center; justify-content: center; }
.search { width: 288px; height: 40px; background: #f3f3f3; display: flex; align-items: center; padding-left: 13px; position: relative; color: #222; font-size: 14px; }
.search span { margin-left: 9px; }
.flowers { position: absolute; right: 0; top: 0; }
.task { width: 49px; height: 40px; display: flex; align-items: center; justify-content: center; flex: none; }
.tv { width: 50px; }
.word { background: #243646; border-bottom: 2px solid #76b9ed; }
.w-w { font: 700 10px "Liberation Sans", sans-serif; fill: #fff; }
.tray { margin-left: auto; display: flex; align-items: center; height: 40px; }
.t2 { margin-left: 10px; }
.t3 { margin-left: 7px; }
.t4 { margin-left: 6px; }
.clock { display: flex; flex-direction: column; align-items: center; width: 72px; font-size: 12px; line-height: 19px; }
.t5 { margin-left: 7px; }
.show-desk { width: 24px; height: 40px; border-right: 1px solid #4a5a68; display: block; }

.ibeam { position: absolute; left: 606px; top: 392px; }
.watermark { position: absolute; left: 1040px; top: 607px; width: 192px; height: 68px; display: flex; align-items: center; font: 400 47px/68px "Open Sans", sans-serif; color: rgba(190,190,190,.45); }
.watermark span { display: block; transform-origin: left; flex: none; }
.wm-a { transform: scaleX(.78); width: 68px; }
.wm-b { transform: scaleX(.57); width: 60px; margin-left: 2px; }
```
